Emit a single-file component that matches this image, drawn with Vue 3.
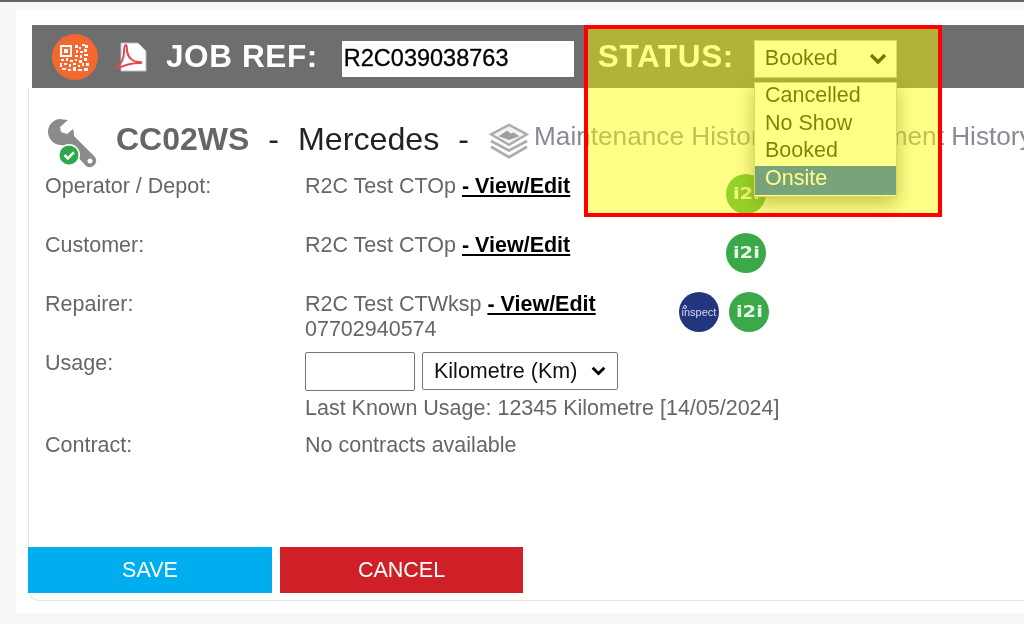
<script setup>
const statusOptions = ['Cancelled', 'No Show', 'Booked', 'Onsite']
const qrBits = [
  [23, 11, 3, 3], [27, 13, 2, 2], [30, 10, 3, 2], [33, 11, 3, 3], [24, 16, 2, 3],
  [28, 17, 3, 2], [32, 15, 3, 3], [23, 21, 3, 2], [28, 21, 2, 3], [32, 20, 4, 2],
  [9, 25, 3, 2], [14, 24, 2, 3], [18, 26, 3, 2], [23, 25, 2, 2], [27, 26, 3, 3],
  [32, 24, 3, 3], [8, 29, 2, 4], [12, 29, 3, 2], [17, 30, 2, 3], [21, 29, 3, 2],
  [26, 31, 2, 2], [30, 29, 2, 3], [34, 29, 3, 3], [10, 34, 4, 2], [16, 35, 3, 2],
  [21, 33, 3, 4], [26, 35, 4, 2], [32, 34, 4, 3]
]
</script>

<template>
  <div class="page">
    <div class="panel">
      <header class="job-bar">
        <svg class="qr-icon" viewBox="0 0 46 46">
          <circle cx="23" cy="23" r="23" fill="#f2682f"/>
          <rect x="9" y="12" width="10" height="10" fill="none" stroke="#fff" stroke-width="2"/>
          <rect x="12" y="15" width="4" height="4" fill="#fff"/>
          <rect v-for="(b, i) in qrBits" :key="i" :x="b[0]" :y="b[1]" :width="b[2]" :height="b[3]" fill="#fff"/>
        </svg>
        <svg class="pdf-icon" viewBox="0 0 32 30">
          <path d="M6 1h17l8 8v20H6z" fill="#fff" stroke="#bdbdbd" stroke-width="1"/>
          <path d="M1 26c4-3 8-9 8-16 0-4 1-7 2-7s1 3 1 6c1 7 6 11 12 11 3 0 3 1 1 1-8 0-16 2-23 6" fill="none" stroke="#db4a50" stroke-width="2"/>
        </svg>
        <span class="bar-label job-label">JOB REF:</span>
        <input class="job-input" value="R2C039038763">
        <span class="bar-label status-label">STATUS:</span>
        <div class="status-select">
          <span>Booked</span>
          <svg viewBox="0 0 18 12" class="chevron">
            <path d="M2 2l7 7 7-7" fill="none" stroke="#000" stroke-width="3.400"/>
          </svg>
        </div>
      </header>

      <section class="card">
        <div class="title-row">
          <svg class="wrench" viewBox="0 0 52 50">
            <path fill-rule="evenodd" d="M12 1l9 1-8 7 1 5 6 2 6-5c1 3 1 5 1 7l21 21a6.500 6.500 0 0 1-9 9L21 28c-2 0-5 0-7-1C6 27 1 20 1 14 1 7 6 2 12 1zM43 40.500a2.500 2.500 0 1 0 .01 0z" fill="#8b8b8b"/>
            <circle cx="22" cy="37" r="11" fill="#fff"/>
            <circle cx="22" cy="37" r="9.500" fill="#2fa84b"/>
            <path d="M17.500 37l3.300 3.300 6-6" fill="none" stroke="#fff" stroke-width="2.600"/>
          </svg>
          <strong class="reg">CC02WS</strong>
          <span class="dash">-</span>
          <span class="make">Mercedes</span>
          <span class="dash">-</span>
          <a class="history">
            <svg class="stack" viewBox="0 0 42 38">
              <path d="M21 2l19 10-19 11L2 12z" fill="#f4f4f4" stroke="#adadad" stroke-width="2.500"/>
              <path d="M10 14l9-6 4 3 3-1 6 4-11 4z" fill="#a0a0a0"/>
              <path d="M2 19l19 10 19-10M2 25l19 11 19-11" fill="none" stroke="#adadad" stroke-width="3"/>
            </svg>
            <span class="history-text">Maintenance History</span>
          </a>
          <a class="history">
            <svg class="stack" viewBox="0 0 42 38">
              <path d="M21 2l19 10-19 11L2 12z" fill="#f4f4f4" stroke="#adadad" stroke-width="2.500"/>
            </svg>
            <span class="history-text">Equipment History</span>
          </a>
        </div>

        <div class="row row-one">
          <div class="label">Operator / Depot:</div>
          <div class="value">R2C Test CTOp <a class="edit">- View/Edit</a></div>
          <div class="badges badges-offset"><span class="badge i2i"><span>i2i</span></span></div>
        </div>
        <div class="row row-one">
          <div class="label">Customer:</div>
          <div class="value">R2C Test CTOp <a class="edit">- View/Edit</a></div>
          <div class="badges badges-offset"><span class="badge i2i"><span>i2i</span></span></div>
        </div>
        <div class="row row-one">
          <div class="label">Repairer:</div>
          <div class="value">R2C Test CTWksp <a class="edit">- View/Edit</a><br>07702940574</div>
          <div class="badges">
            <span class="badge inspect">inspect</span>
            <span class="badge i2i"><span>i2i</span></span>
          </div>
        </div>
        <div class="row row-usage">
          <div class="label">Usage:</div>
          <div class="value">
            <div class="usage-controls">
              <input class="usage-input">
              <div class="unit-select">
                <span>Kilometre (Km)</span>
                <svg viewBox="0 0 18 12" class="chevron small">
                  <path d="M2 2l7 7 7-7" fill="none" stroke="#000" stroke-width="3.400"/>
                </svg>
              </div>
            </div>
            <div class="last-known">Last Known Usage: 12345 Kilometre [14/05/2024]</div>
          </div>
        </div>
        <div class="row">
          <div class="label">Contract:</div>
          <div class="value">No contracts available</div>
        </div>

        <div class="actions">
          <button class="btn save">SAVE</button>
          <button class="btn cancel">CANCEL</button>
        </div>
      </section>
    </div>

    <ul class="status-menu">
      <li v-for="opt in statusOptions" :key="opt" :class="{ active: opt === 'Onsite' }">{{ opt }}</li>
    </ul>
    <div class="highlight"></div>
  </div>
</template>

<style scoped>
.page {
  position: relative;
  width: 1024px;
  height: 624px;
  overflow: hidden;
  box-sizing: border-box;
  border-top: 2px solid #666;
  background: #f8f8f8;
  font-family: "Liberation Sans", Arial, sans-serif;
  font-size: 21.500px;
  color: #666;
  filter: blur(0.4px);
}
.panel {
  margin: 8px 0 0 16px;
  height: 603px;
  padding: 15px 0 0 12px;
  box-sizing: border-box;
  background: #fff;
}
.job-bar {
  display: flex;
  align-items: center;
  height: 63px;
  margin-left: 4px;
  background: #6e6e6e;
  white-space: nowrap;
}
.qr-icon {
  width: 46px;
  height: 46px;
  margin-left: 20px;
  flex: none;
}
.pdf-icon {
  width: 32px;
  height: 30px;
  margin-left: 17px;
  flex: none;
}
.bar-label {
  color: #fff;
  font-weight: 700;
  font-size: 31.500px;
  letter-spacing: 0.6px;
}
.job-label {
  margin-left: 19px;
}
.job-input {
  width: 232px;
  height: 36px;
  box-sizing: border-box;
  margin: 4px 0 0 24px;
  padding: 0 2px;
  border: 0;
  background: #fff;
  color: #000;
  font-family: "Liberation Sans", Arial, sans-serif;
  font-size: 23.500px;
  -webkit-text-stroke: 0.3px #000;
}
.status-label {
  margin-left: 24px;
}
.status-select {
  display: flex;
  align-items: center;
  justify-content: space-between;
  width: 143px;
  height: 38px;
  box-sizing: border-box;
  margin: 4px 0 0 20px;
  padding: 0 9px 0 10px;
  background: #fff;
  border: 1px solid #bbb;
  color: #111;
}
.chevron {
  width: 18px;
  height: 12px;
}
.chevron.small {
  width: 15px;
  height: 10px;
}
.card {
  display: flex;
  flex-direction: column;
  height: 513px;
  box-sizing: border-box;
  padding: 30px 0 7px;
  border-left: 1px solid #e8e8e8;
  border-bottom: 1px solid #e4e4e4;
  border-bottom-left-radius: 12px;
}
.title-row {
  display: flex;
  align-items: flex-start;
  height: 56px;
  padding-left: 18px;
  white-space: nowrap;
}
.wrench {
  width: 52px;
  height: 50px;
  flex: none;
}
.reg {
  margin-left: 17px;
  margin-top: 3px;
  font-size: 32px;
  color: #666;
}
.dash {
  margin: 3px 19px 0;
  font-size: 32px;
  color: #222;
}
.make {
  margin-top: 3px;
  font-size: 32.200px;
  color: #222;
}
.history {
  display: flex;
  align-items: flex-start;
  font-size: 26.200px;
  color: #8a8a96;
}
.history-text {
  margin-top: 3px;
}
.stack {
  width: 42px;
  height: 36px;
  margin: 5px 4px 0 0;
  flex: none;
}
.row {
  display: grid;
  grid-template-columns: 260px 374px 1fr;
  padding-left: 16px;
  line-height: 25px;
}
.row-one {
  height: 59px;
}
.row-usage {
  height: 82px;
}
.usage-controls {
  display: flex;
  gap: 7px;
  height: 40px;
  margin-top: 1px;
}
.usage-input {
  width: 110px;
  height: 39px;
  box-sizing: border-box;
  border: 1px solid #767676;
  border-radius: 2px;
}
.unit-select {
  display: flex;
  align-items: center;
  justify-content: space-between;
  width: 196px;
  height: 38px;
  box-sizing: border-box;
  padding: 0 11px 0 11px;
  border: 1px solid #767676;
  border-radius: 2px;
  color: #111;
}
.last-known {
  margin-top: 4px;
  white-space: nowrap;
}
.edit {
  color: #000;
  font-weight: 700;
  text-decoration: underline;
}
.badges {
  display: flex;
  gap: 10px;
}
.badges-offset {
  padding-left: 47px;
}
.badge {
  position: relative;
  display: flex;
  align-items: center;
  justify-content: center;
  width: 40px;
  height: 40px;
  border-radius: 50%;
  color: #fff;
}
.i2i {
  background: #39a94a;
  font-family: "DejaVu Sans", sans-serif;
  font-weight: 700;
  font-size: 15px;
  color: #e7f5e9;
}
.i2i span {
  display: inline-block;
  transform: scaleX(1.3);
}
.inspect {
  background: #24357f;
  font-size: 11px;
  color: #d5dbef;
}
.inspect::before {
  content: "";
  position: absolute;
  left: 4px;
  top: 13px;
  width: 4px;
  height: 4px;
  box-sizing: border-box;
  border: 1px solid #d5dbef;
  border-radius: 50%;
}
.actions {
  display: flex;
  gap: 8px;
  margin-top: auto;
  margin-left: -1px;
}
.btn {
  width: 244px;
  height: 46px;
  border: 0;
  color: #fff;
  font-family: "Liberation Sans", Arial, sans-serif;
  font-size: 21.500px;
}
.save {
  background: #00aeef;
}
.cancel {
  width: 243px;
  background: #cf2027;
}
.status-menu {
  position: absolute;
  left: 754px;
  top: 80px;
  width: 143px;
  box-sizing: border-box;
  margin: 0;
  padding: 0 0 1px;
  list-style: none;
  background: #fff;
  border: 1px solid #bbb;
  box-shadow: 0 6px 18px rgba(0, 0, 0, 0.45);
  color: #111;
  line-height: 27.500px;
}
.status-menu li {
  padding-left: 10px;
  height: 27.500px;
  position: relative;
  top: -1px;
}
.status-menu .active {
  background: #0051e8;
  color: #fff;
  top: 0;
  height: 29px;
  line-height: 25px;
}
.highlight {
  position: absolute;
  left: 584px;
  top: 23px;
  width: 358px;
  height: 192px;
  box-sizing: border-box;
  border: 4px solid #f00;
  background: rgba(255, 255, 0, 0.47);
  pointer-events: none;
}
</style>
